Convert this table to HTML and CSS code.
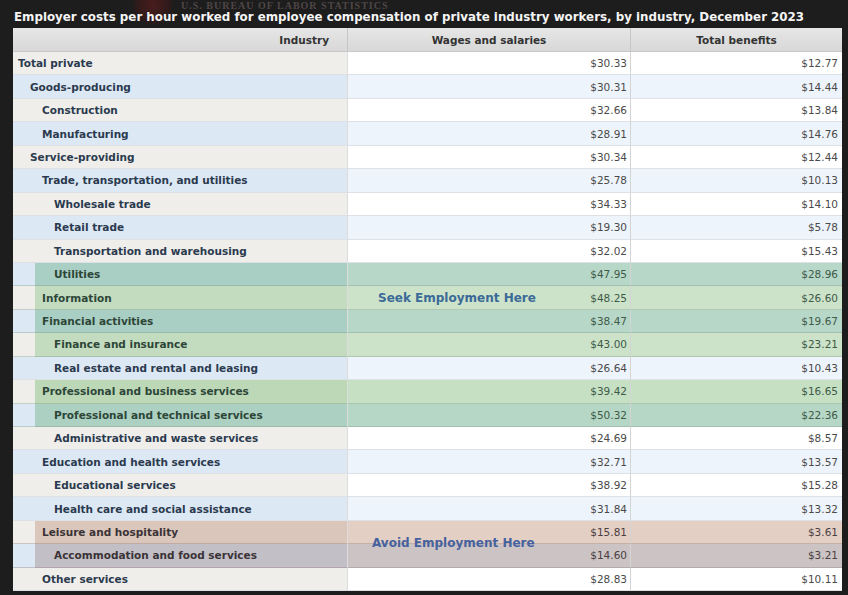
FILE: index.html
```html
<!DOCTYPE html>
<html>
<head>
<meta charset="utf-8">
<link rel="stylesheet" href="styles.css">
</head>
<body>
<div class="page">
  <div class="titlebar">
    <span class="seal"></span>
    <span class="logo">U.S. BUREAU OF LABOR STATISTICS</span>
    <h1 class="title">Employer costs per hour worked for employee compensation of private industry workers, by industry, December 2023</h1>
  </div>
  <div class="table">
    <div class="row head">
      <div class="cell ind">Industry</div>
      <div class="cell c">Wages and salaries</div>
      <div class="cell c last">Total benefits</div>
    </div>
    <div class="row a"><div class="cell ind l0">Total private</div><div class="cell n">$30.33</div><div class="cell n last">$12.77</div></div>
    <div class="row b"><div class="cell ind l1">Goods-producing</div><div class="cell n">$30.31</div><div class="cell n last">$14.44</div></div>
    <div class="row a"><div class="cell ind l2">Construction</div><div class="cell n">$32.66</div><div class="cell n last">$13.84</div></div>
    <div class="row b"><div class="cell ind l2">Manufacturing</div><div class="cell n">$28.91</div><div class="cell n last">$14.76</div></div>
    <div class="row a"><div class="cell ind l1">Service-providing</div><div class="cell n">$30.34</div><div class="cell n last">$12.44</div></div>
    <div class="row b"><div class="cell ind l2">Trade, transportation, and utilities</div><div class="cell n">$25.78</div><div class="cell n last">$10.13</div></div>
    <div class="row a"><div class="cell ind l3">Wholesale trade</div><div class="cell n">$34.33</div><div class="cell n last">$14.10</div></div>
    <div class="row b"><div class="cell ind l3">Retail trade</div><div class="cell n">$19.30</div><div class="cell n last">$5.78</div></div>
    <div class="row a"><div class="cell ind l3">Transportation and warehousing</div><div class="cell n">$32.02</div><div class="cell n last">$15.43</div></div>
    <div class="row b g1"><div class="cell ind l3">Utilities</div><div class="cell n">$47.95</div><div class="cell n last">$28.96</div></div>
    <div class="row a g2"><div class="cell ind l2">Information</div><div class="cell n split"><span class="note seek">Seek Employment Here</span><span>$48.25</span></div><div class="cell n last">$26.60</div></div>
    <div class="row b g1"><div class="cell ind l2">Financial activities</div><div class="cell n">$38.47</div><div class="cell n last">$19.67</div></div>
    <div class="row a g2"><div class="cell ind l3">Finance and insurance</div><div class="cell n">$43.00</div><div class="cell n last">$23.21</div></div>
    <div class="row b"><div class="cell ind l3">Real estate and rental and leasing</div><div class="cell n">$26.64</div><div class="cell n last">$10.43</div></div>
    <div class="row a g3"><div class="cell ind l2">Professional and business services</div><div class="cell n">$39.42</div><div class="cell n last">$16.65</div></div>
    <div class="row b g4"><div class="cell ind l3">Professional and technical services</div><div class="cell n">$50.32</div><div class="cell n last">$22.36</div></div>
    <div class="row a"><div class="cell ind l3">Administrative and waste services</div><div class="cell n">$24.69</div><div class="cell n last">$8.57</div></div>
    <div class="row b"><div class="cell ind l2">Education and health services</div><div class="cell n">$32.71</div><div class="cell n last">$13.57</div></div>
    <div class="row a"><div class="cell ind l3">Educational services</div><div class="cell n">$38.92</div><div class="cell n last">$15.28</div></div>
    <div class="row b"><div class="cell ind l3">Health care and social assistance</div><div class="cell n">$31.84</div><div class="cell n last">$13.32</div></div>
    <div class="row a r1"><div class="cell ind l2">Leisure and hospitality</div><div class="cell n anchor"><span class="note avoid">Avoid Employment Here</span>$15.81</div><div class="cell n last">$3.61</div></div>
    <div class="row b r2"><div class="cell ind l3">Accommodation and food services</div><div class="cell n">$14.60</div><div class="cell n last">$3.21</div></div>
    <div class="row a"><div class="cell ind l2">Other services</div><div class="cell n">$28.83</div><div class="cell n last">$10.11</div></div>
  </div>
</div>
</body>
</html>
```

FILE: styles.css
```css
* { box-sizing: border-box; }
html, body { margin: 0; padding: 0; }
body {
  background: #1d1d1d;
  width: 848px;
  height: 595px;
  overflow: hidden;
  font-family: "DejaVu Sans", Verdana, sans-serif;
}
.page { padding: 0 6px 0 13px; }
.titlebar {
  position: relative;
  height: 28px;
  display: flex;
  align-items: flex-end;
}
.seal {
  position: absolute;
  left: 118px;
  top: -14px;
  width: 44px;
  height: 38px;
  border-radius: 50%;
  background: radial-gradient(circle, #4a1d1d 0%, #2f1a1a 55%, rgba(29,29,29,0) 72%);
}
.logo {
  position: absolute;
  left: 168px;
  top: 1px;
  font-family: "Liberation Serif", serif;
  font-weight: bold;
  font-size: 10px;
  line-height: 10px;
  color: #4f4646;
  letter-spacing: 1px;
}
.title {
  position: relative;
  margin: 0 0 4px 1px;
  font-size: 11.85px;
  font-weight: bold;
  color: #f4f4f4;
  white-space: nowrap;
  letter-spacing: 0;
}
.table {
  width: 829px;
  background: #fff;
}
.row {
  display: grid;
  grid-template-columns: 335px 283px 211px;
  height: 23.45px;
  --ib: #efeeeb;
  --nb: #ffffff;
}
.row.b { --ib: #dde8f5; --nb: #eef4fb; }
.cell {
  display: flex;
  align-items: center;
  border-bottom: 1px solid #dde1e6;
  background: var(--nb);
  font-size: 10.5px;
  white-space: nowrap;
}
.ind {
  background: var(--ib);
  font-weight: bold;
  color: #2b3a4e;
  border-right: 1px solid #dcdcdc;
}
.l0 { padding-left: 5px; }
.l1 { padding-left: 17px; }
.l2 { padding-left: 29px; }
.l3 { padding-left: 41px; }
.n {
  justify-content: flex-end;
  padding-right: 3px;
  color: #4a4a4a;
  border-right: 1px solid #d4d4d4;
}
.n.last { border-right: none; padding-right: 4px; }
.head { height: 24px; }
.head .cell {
  background: linear-gradient(#e6e6e6, #d8d8d8);
  border-bottom: 1px solid #c8c8c8;
  color: #333;
  font-weight: bold;
}
.head .ind { justify-content: flex-end; padding-right: 18px; border-right: 1px solid #c6c6c6; }
.head .c { justify-content: center; border-right: 1px solid #c6c6c6; }
.head .c.last { border-right: none; }

/* highlighted rows */
.g1 { --hi: #a9cec3; --hn: #b7d7c8; }
.g2 { --hi: #c3dcbf; --hn: #cce3c9; }
.g3 { --hi: #bcd8b6; --hn: #c6e0c3; }
.g4 { --hi: #acd0c1; --hn: #b6d7c6; }
.r1 { --hi: #dbc6bb; --hn: #e3cfc4; }
.r2 { --hi: #c3bfc6; --hn: #ccc4c4; }
.g1 .ind, .g2 .ind, .g3 .ind, .g4 .ind, .r1 .ind, .r2 .ind {
  background: linear-gradient(90deg, var(--ib) 22px, var(--hi) 22px);
  border-bottom-color: rgba(120,150,135,0.35);
}
.g1 .n, .g2 .n, .g3 .n, .g4 .n, .r1 .n, .r2 .n {
  background: var(--hn);
  border-bottom-color: rgba(120,150,135,0.35);
}
.g1 .ind, .g2 .ind, .g3 .ind, .g4 .ind { color: #2d4638; }
.g1 .n, .g2 .n, .g3 .n, .g4 .n { color: #3e5a48; }
.r1 .ind, .r2 .ind { color: #3a3336; border-bottom-color: rgba(140,120,120,0.35); }
.r1 .n, .r2 .n { color: #4a4042; border-bottom-color: rgba(140,120,120,0.35); }

.split { justify-content: space-between; padding-left: 30px; }
.note {
  font-weight: bold;
  font-size: 12px;
}
.seek { color: #3b6a98; }
.anchor { position: relative; }
.avoid {
  position: absolute;
  left: 24px;
  top: 100%;
  transform: translateY(-50%);
  color: #46629e;
}
```
